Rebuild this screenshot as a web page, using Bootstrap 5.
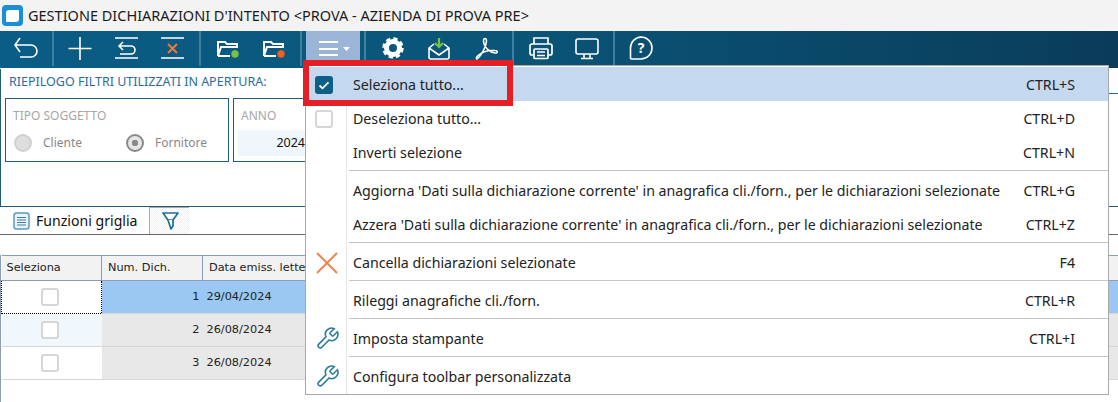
<!DOCTYPE html>
<html lang="it">
<head>
  <meta charset="UTF-8" />
  <title>Gestione dichiarazioni d'intento</title>
  <link href="https://cdn.jsdelivr.net/npm/bootstrap@5.3.0/dist/css/bootstrap.min.css" rel="stylesheet">
  <style>
    body {
      width: 1118px;
      height: 402px;
      overflow: hidden;
      position: relative;
      background: #fff;
      font-family: "Noto Sans", sans-serif;
    }

    .title-strip {
      height: 31px;
      background: #f3f3f3;
      font-size: 14.5px;
      color: #1a1a1a;
      padding-left: 2px;
      gap: 5px;
    }

    .tool-strip {
      height: 37px;
      padding-left: 3px;
      background: linear-gradient(90deg, #0a5d86 0%, #0a5578 45%, #0a3c5a 100%);
    }

    .tool-btn {
      width: 46px;
      height: 37px;
      flex: none;
    }

    .tool-btn svg { display: block; }

    .tool-sep {
      width: 10px;
      height: 35px;
      flex: none;
      position: relative;
    }

    .tool-sep::after {
      content: "";
      position: absolute;
      left: 4px;
      top: 0;
      bottom: 0;
      width: 2px;
      background: #3f7f9f;
    }

    .tool-sep.sep-a { width: 8px; }
    .tool-sep.sep-a::after { left: 3px; }
    .tool-sep.sep-b { width: 9px; }
    .tool-sep.sep-b::after { left: 3px; }

    .tool-active {
      width: 54px;
      height: 37px;
      flex: none;
      background: #9bb5d6;
    }

    .filter-panel {
      height: 138px;
      margin-top: 1px;
      border-left: 1px solid #1f5d78;
      border-bottom: 1px solid #1f5d78;
      padding-left: 4px;
    }

    .filter-heading {
      height: 29px;
      padding-left: 4px;
      padding-top: 4px;
      font-size: 12.5px;
      color: #2b6c9c;
    }

    .group-frame {
      height: 64px;
      border: 1px solid #1f5d78;
      padding: 7px 7px 0;
      color: #a6a6a6;
      font-size: 12px;
    }

    .frame-type { width: 224px; margin-right: 4px; flex: none; }
    .frame-year { width: 500px; padding-left: 4px; flex: none; }

    .frame-edge {
      flex-grow: 1;
      height: 0;
      margin-top: -5px;
      border-top: 1px solid #1f6f94;
    }

    .frame-label { height: 21px; padding-top: 1px; }
    .frame-year .frame-label { padding-left: 3px; }

    .radio-row { padding-top: 7px; color: #888; font-size: 12px; }

    .radio-dot {
      width: 18px;
      height: 18px;
      border-radius: 50%;
      border: 2px solid #d0d0d0;
      background: #dedede;
      flex: none;
      margin-left: 1px;
      margin-right: 11px;
    }

    .radio-on {
      border-color: #8a8a8a;
      background: radial-gradient(circle, #8a8a8a 0 3px, #e6e6e6 3.5px);
    }

    .radio-first { width: 112px; }

    .year-field {
      width: 67px;
      height: 26px;
      margin-top: 3px;
      background: #f0f7fc;
      color: #111;
      font-size: 12.5px;
      text-align: right;
      line-height: 26px;
    }

    .tab-strip {
      height: 28px;
      border-bottom: 1px solid #666;
      padding-left: 13px;
    }

    .tab-label {
      font-size: 14.1px;
      color: #111;
      margin-left: 6px;
      width: 113px;
    }

    .tab-filter {
      width: 40px;
      height: 27px;
      border-left: 1px solid #aaa;
      border-top: 1px solid #aaa;
      background: repeating-conic-gradient(#f1f1f1 0 25%, #fff 0 50%) 0 0 / 2px 2px;
    }

    .grid-wrap {
      height: 147px;
      margin-top: 20px;
      border-left: 1px solid #8a9db3;
    }

    .data-grid {
      table-layout: fixed;
      width: 1117px;
      margin: 0;
      font-family: "DejaVu Sans", sans-serif;
      font-size: 11.3px;
      color: #222;
    }

    .grid-col-a { width: 100px; }
    .grid-col-b { width: 101px; }
    .grid-col-c { width: 340px; }

    .data-grid th, .data-grid td {
      padding: 0 6px;
      vertical-align: middle;
      box-shadow: none;
    }

    .data-grid th {
      height: 25px;
      font-weight: 400;
      background: #f2f2f2;
      border-top: 1px solid #8a9db3;
      border-bottom: 1px solid #8a9db3;
      border-right: 1px solid #8a9db3;
    }

    .data-grid th:first-child { padding-left: 5px; }
    .data-grid th:last-child { border-right: 0; }

    .data-grid td {
      height: 33px;
      background: #e8e8e8;
      border-bottom: 1px solid #d6d6d6;
      padding: 0 4px;
    }

    .data-grid td.sel-cell { background: #fff; text-align: center; padding: 0 3px 0 0; }
    .data-grid td.sel-tint { background: #f0f8fd; }
    .data-grid td.sel-focus { border: 1px dotted #000; }
    .data-grid tr.row-current td:not(.sel-cell) { background: #9ac8f2; }
    .data-grid td.num-cell { text-align: right; padding-right: 3px; }

    .check-box {
      display: inline-block;
      width: 18px;
      height: 18px;
      border: 2px solid #d6d6d6;
      border-radius: 3px;
      background: #fff;
      vertical-align: middle;
    }

    .action-menu {
      position: absolute;
      left: 305px;
      top: 65px;
      width: 804px;
      height: 330px;
      padding: 1px 0 0;
      border: 1px solid #a8a8a8;
      border-radius: 0;
      font-size: 14.2px;
      color: #222;
      background: linear-gradient(90deg, #fff 40px, #e6e6e6 40px, #e6e6e6 41px, #fff 41px);
    }

    .action-menu .dropdown-item {
      height: 34px;
      padding: 1px 33px 0 0;
      color: #222;
    }

    .action-menu .dropdown-item.active {
      background: #c4d8f0;
      color: #222;
    }

    .item-icon {
      width: 47px;
      flex: none;
      padding-left: 9px;
    }

    .action-menu .dropdown-divider {
      margin: 1px 0 2px 43px;
      border-top: 1px solid #c6c6c6;
      opacity: 1;
    }

    .red-frame {
      position: absolute;
      left: 303px;
      top: 60px;
      width: 210px;
      height: 46px;
      border: 6px solid #e61e25;
      pointer-events: none;
      z-index: 1001;
    }
  </style>
</head>
<body>
  <div class="title-strip d-flex align-items-center">
    <svg width="21" height="21" viewBox="0 0 21 21"><rect x="0" y="0" width="21" height="21" rx="4" fill="#1b8fd6"/><path d="M7 5h9a1 1 0 0 1 1 1v8a3 3 0 0 1-3 3H5a1 1 0 0 1-1-1V8a3 3 0 0 1 3-3z" fill="#fff"/></svg>
    <span>GESTIONE DICHIARAZIONI D'INTENTO &lt;PROVA - AZIENDA DI PROVA PRE&gt;</span>
  </div>

  <div class="tool-strip d-flex">
    <div class="tool-btn"><svg width="46" height="37" fill="none" stroke="#fff" stroke-width="1.6"><path d="M12 14H28a6 6 0 0 1 0 12H17M17 7l-5 7 5 7"/></svg></div>
    <div class="tool-sep sep-a"></div>
    <div class="tool-btn"><svg width="46" height="37" fill="none" stroke="#fff" stroke-width="1.6"><path d="M23 6V29M11.500 17.500H34.500"/></svg></div>
    <div class="tool-btn"><svg width="46" height="37" fill="none" stroke="#fff" stroke-width="1.6"><path d="M12 7H35M12 27H35M16 15H28a4 4 0 0 1 0 8H17M20 11l-4 4 4 4"/></svg></div>
    <div class="tool-btn"><svg width="46" height="37" fill="none" stroke="#fff" stroke-width="1.6"><path d="M12 7H35M12 27H35"/><path d="M19 13l9 9M28 13l-9 9" stroke="#ee7a3c" stroke-width="2"/></svg></div>
    <div class="tool-sep"></div>
    <div class="tool-btn"><svg width="46" height="37" fill="none" stroke="#fff" stroke-width="2"><path d="M13 25V11H20l2 2H32v3M13 25l3-9H33"/><path d="M13 25H25"/><circle cx="30" cy="23" r="3.700" fill="#7ac143" stroke="none"/></svg></div>
    <div class="tool-btn"><svg width="46" height="37" fill="none" stroke="#fff" stroke-width="2"><path d="M13 25V11H20l2 2H32v3M13 25l3-9H33"/><path d="M13 25H25"/><circle cx="30" cy="23" r="3.700" fill="#f2601d" stroke="none"/></svg></div>
    <div class="tool-sep sep-b"></div>
    <div class="tool-active"><svg width="54" height="37" fill="none" stroke="#fff" stroke-width="1.800"><path d="M13 11H32M13 18H32M13 24H32"/><path d="M37 16h7l-3.500 4z" fill="#fff" stroke="none"/></svg></div>
    <div class="tool-sep"></div>
    <div class="tool-btn"><svg width="46" height="37" fill="none" stroke="#fff"><circle cx="23" cy="17" r="6.500" stroke-width="5"/><circle cx="23" cy="17" r="9" stroke-width="3.500" stroke-dasharray="4.100 2.970"/></svg></div>
    <div class="tool-btn"><svg width="46" height="37" fill="none" stroke="#fff" stroke-width="1.600"><path d="M13 17l5-4M33 17l-5-4M13 17V26a2 2 0 0 0 2 2H31a2 2 0 0 0 2-2V17L23 24Z" stroke-linejoin="round"/><path d="M23 7V15M19 12l4 4 4-4" stroke="#7ac143" stroke-width="2.200"/></svg></div>
    <div class="tool-btn"><svg width="46" height="37" fill="none" stroke="#fff" stroke-width="1.500"><path d="M15 28C18 26 24 17 24.500 10 24.500 6.500 21.500 6.500 21.500 10 21.500 15 27 21.500 33 22 36 22 36 19.500 33 19.500 27 19 20 21 16 24.500 14 26.500 14 28 15 28Z" stroke-linejoin="round"/></svg></div>
    <div class="tool-sep"></div>
    <div class="tool-btn"><svg width="46" height="37" fill="none" stroke="#fff" stroke-width="1.700"><path d="M16 13V7H30V13M16 24H14a2 2 0 0 1-2-2V15a2 2 0 0 1 2-2H32a2 2 0 0 1 2 2V22a2 2 0 0 1-2 2H30"/><rect x="16" y="18" width="14" height="9.500" rx="1"/><path d="M19 21H27M19 24.500H27"/></svg></div>
    <div class="tool-btn"><svg width="46" height="37" fill="none" stroke="#fff" stroke-width="1.600"><rect x="12" y="8" width="22" height="15" rx="2"/><path d="M20 23V27M26 23V27M17 27.500H29"/></svg></div>
    <div class="tool-sep sep-a"></div>
    <div class="tool-btn ms-1"><svg width="46" height="37" fill="none" stroke="#fff" stroke-width="1.600"><path d="M19 6a11 11 0 1 1 0 22H9.500a1 1 0 0 1-1-1V17A11 11 0 0 1 19 6Z"/><text x="19" y="22" text-anchor="middle" fill="#fff" stroke="none" font-family="Noto Sans" font-weight="700" font-size="14">?</text></svg></div>
  </div>

  <div class="filter-panel">
    <div class="filter-heading">RIEPILOGO FILTRI UTILIZZATI IN APERTURA:</div>
    <div class="d-flex">
      <div class="group-frame frame-type">
        <div class="frame-label">TIPO SOGGETTO</div>
        <div class="radio-row d-flex">
          <div class="radio-first d-flex align-items-center"><span class="radio-dot"></span>Cliente</div>
          <div class="d-flex align-items-center"><span class="radio-dot radio-on"></span>Fornitore</div>
        </div>
      </div>
      <div class="group-frame frame-year">
        <div class="frame-label">ANNO</div>
        <div class="year-field">2024</div>
      </div>
      <div class="frame-edge"></div>
    </div>
  </div>

  <div class="tab-strip d-flex align-items-center">
    <svg width="17" height="18" viewBox="0 0 17 18" fill="#eaf3f8" stroke="#5a9cc2" stroke-width="1.500"><rect x="1" y="1" width="15" height="16" rx="2.500"/><path d="M4 5.500H13M4 8H13M4 10.500H13M4 13H13" stroke="#3f7f9f" stroke-width="1"/></svg>
    <span class="tab-label">Funzioni griglia</span>
    <div class="tab-filter d-flex align-items-center justify-content-center">
      <svg width="18" height="20" viewBox="0 0 18 20" fill="#fff" stroke="#1c6f92" stroke-width="1.700" stroke-linejoin="round"><path d="M2 2H17L12 9H7Z"/><path d="M7 9L10 18 12 15V9"/></svg>
    </div>
  </div>

  <div class="grid-wrap">
    <table class="table data-grid">
      <colgroup><col class="grid-col-a"><col class="grid-col-b"><col class="grid-col-c"><col></colgroup>
      <thead>
        <tr><th>Seleziona</th><th>Num. Dich.</th><th>Data emiss. lettera</th><th></th></tr>
      </thead>
      <tbody>
        <tr class="row-current"><td class="sel-cell sel-focus"><span class="check-box"></span></td><td class="num-cell">1</td><td>29/04/2024</td><td></td></tr>
        <tr><td class="sel-cell sel-tint"><span class="check-box"></span></td><td class="num-cell">2</td><td>26/08/2024</td><td></td></tr>
        <tr><td class="sel-cell"><span class="check-box"></span></td><td class="num-cell">3</td><td>26/08/2024</td><td></td></tr>
      </tbody>
    </table>
  </div>

  <ul class="dropdown-menu show action-menu">
    <li><a class="dropdown-item active d-flex align-items-center" href="#"><span class="item-icon"><svg class="d-block" width="18" height="18" viewBox="0 0 18 18"><rect width="18" height="18" rx="3" fill="#0d5f86"/><path d="M4.500 9.500l3 2.800 6-6" fill="none" stroke="#fff" stroke-width="1.800"/></svg></span><span class="flex-grow-1">Seleziona tutto...</span><span>CTRL+S</span></a></li>
    <li><a class="dropdown-item d-flex align-items-center" href="#"><span class="item-icon"><span class="check-box d-block"></span></span><span class="flex-grow-1">Deseleziona tutto...</span><span>CTRL+D</span></a></li>
    <li><a class="dropdown-item d-flex align-items-center" href="#"><span class="item-icon"></span><span class="flex-grow-1">Inverti selezione</span><span>CTRL+N</span></a></li>
    <li><hr class="dropdown-divider"></li>
    <li><a class="dropdown-item d-flex align-items-center" href="#"><span class="item-icon"></span><span class="flex-grow-1">Aggiorna 'Dati sulla dichiarazione corrente' in anagrafica cli./forn., per le dichiarazioni selezionate</span><span>CTRL+G</span></a></li>
    <li><a class="dropdown-item d-flex align-items-center" href="#"><span class="item-icon"></span><span class="flex-grow-1">Azzera 'Dati sulla dichiarazione corrente' in anagrafica cli./forn., per le dichiarazioni selezionate</span><span>CTRL+Z</span></a></li>
    <li><hr class="dropdown-divider"></li>
    <li><a class="dropdown-item d-flex align-items-center" href="#"><span class="item-icon"><svg class="d-block" width="24" height="24" viewBox="0 0 24 24" fill="none" stroke="#ef8350" stroke-width="2"><path d="M2 2L22 22M22 2L2 22"/></svg></span><span class="flex-grow-1">Cancella dichiarazioni selezionate</span><span>F4</span></a></li>
    <li><hr class="dropdown-divider"></li>
    <li><a class="dropdown-item d-flex align-items-center" href="#"><span class="item-icon"></span><span class="flex-grow-1">Rileggi anagrafiche cli./forn.</span><span>CTRL+R</span></a></li>
    <li><hr class="dropdown-divider"></li>
    <li><a class="dropdown-item d-flex align-items-center" href="#"><span class="item-icon"><svg class="d-block" width="25" height="25" viewBox="0 0 24 24" fill="none" stroke="#2a7a9e" stroke-width="1.500"><path d="M14.700 6.300a1 1 0 0 0 0 1.400l1.600 1.600a1 1 0 0 0 1.400 0l3.770-3.770a6 6 0 0 1-7.940 7.940l-6.910 6.910a2.120 2.120 0 0 1-3-3l6.910-6.910a6 6 0 0 1 7.940-7.940l-3.760 3.760z"/></svg></span><span class="flex-grow-1">Imposta stampante</span><span>CTRL+I</span></a></li>
    <li><hr class="dropdown-divider"></li>
    <li><a class="dropdown-item d-flex align-items-center" href="#"><span class="item-icon"><svg class="d-block" width="25" height="25" viewBox="0 0 24 24" fill="none" stroke="#2a7a9e" stroke-width="1.500"><path d="M14.700 6.300a1 1 0 0 0 0 1.400l1.600 1.600a1 1 0 0 0 1.400 0l3.770-3.770a6 6 0 0 1-7.940 7.940l-6.910 6.910a2.120 2.120 0 0 1-3-3l6.910-6.910a6 6 0 0 1 7.940-7.940l-3.760 3.760z"/></svg></span><span class="flex-grow-1">Configura toolbar personalizzata</span></a></li>
  </ul>

  <div class="red-frame"></div>

  <script src="https://cdn.jsdelivr.net/npm/bootstrap@5.3.0/dist/js/bootstrap.bundle.min.js"></script>
</body>
</html>
